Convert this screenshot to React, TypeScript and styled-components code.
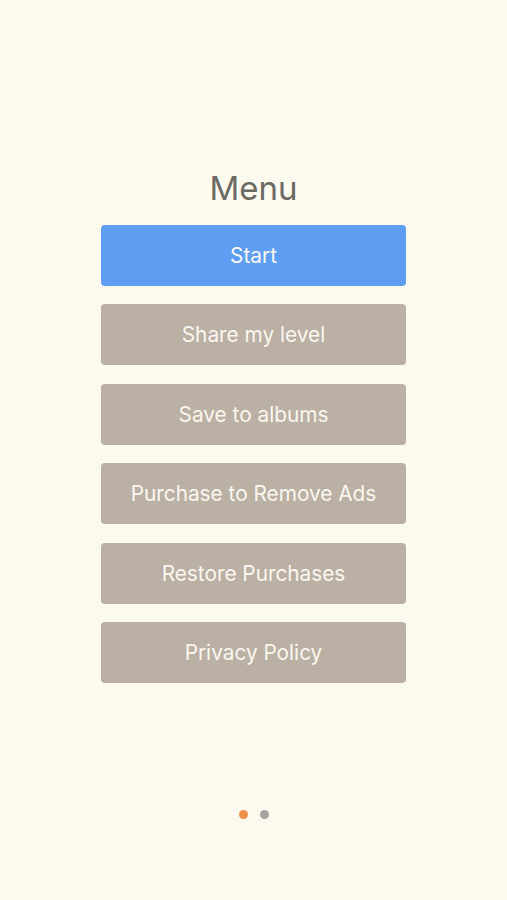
import React from 'react';
import styled, { createGlobalStyle } from 'styled-components';

const GlobalStyle = createGlobalStyle`
  html, body {
    margin: 0;
    padding: 0;
    background: #fcf9ef;
  }
  body {
    font-family: Inter, "Noto Sans", "Liberation Sans", sans-serif;
  }
`;

const items = [
  { label: 'Start', primary: true },
  { label: 'Share my level', primary: false },
  { label: 'Save to albums', primary: false },
  { label: 'Purchase to Remove Ads', primary: false },
  { label: 'Restore Purchases', primary: false },
  { label: 'Privacy Policy', primary: false },
];

const App: React.FC = () => {
  return (
    <Page>
      <GlobalStyle />
      <Title>Menu</Title>
      <ButtonList>
        {items.map(item => (
          <MenuButton key={item.label} $primary={item.primary}>
            {item.label}
          </MenuButton>
        ))}
      </ButtonList>
      <Pager>
        <Dot $active />
        <Dot />
      </Pager>
    </Page>
  );
};

export default App;

const Page = styled.div`
  width: 507px;
  height: 900px;
  display: flex;
  flex-direction: column;
  align-items: center;
  padding-top: 168px;
  box-sizing: border-box;
`;

const Title = styled.h1`
  margin: 0;
  font-size: 33px;
  font-weight: 400;
  line-height: 40px;
  color: #6b6a62;
`;

const ButtonList = styled.div`
  margin-top: 17px;
  display: flex;
  flex-direction: column;
  gap: 18.4px;
`;

const MenuButton = styled.div<{ $primary?: boolean }>`
  width: 305px;
  height: 61px;
  border-radius: 4px;
  display: flex;
  align-items: center;
  justify-content: center;
  font-size: 20.8px;
  color: #faf7f0;
  background: ${p => (p.$primary ? '#5d9ef2' : '#bab0a4')};
  cursor: pointer;
`;

const Pager = styled.div`
  margin-top: 127.5px;
  display: flex;
  gap: 12px;
`;

const Dot = styled.span<{ $active?: boolean }>`
  width: 9px;
  height: 9px;
  border-radius: 50%;
  background: ${p => (p.$active ? '#ef8f48' : '#a3a3a1')};
`;
